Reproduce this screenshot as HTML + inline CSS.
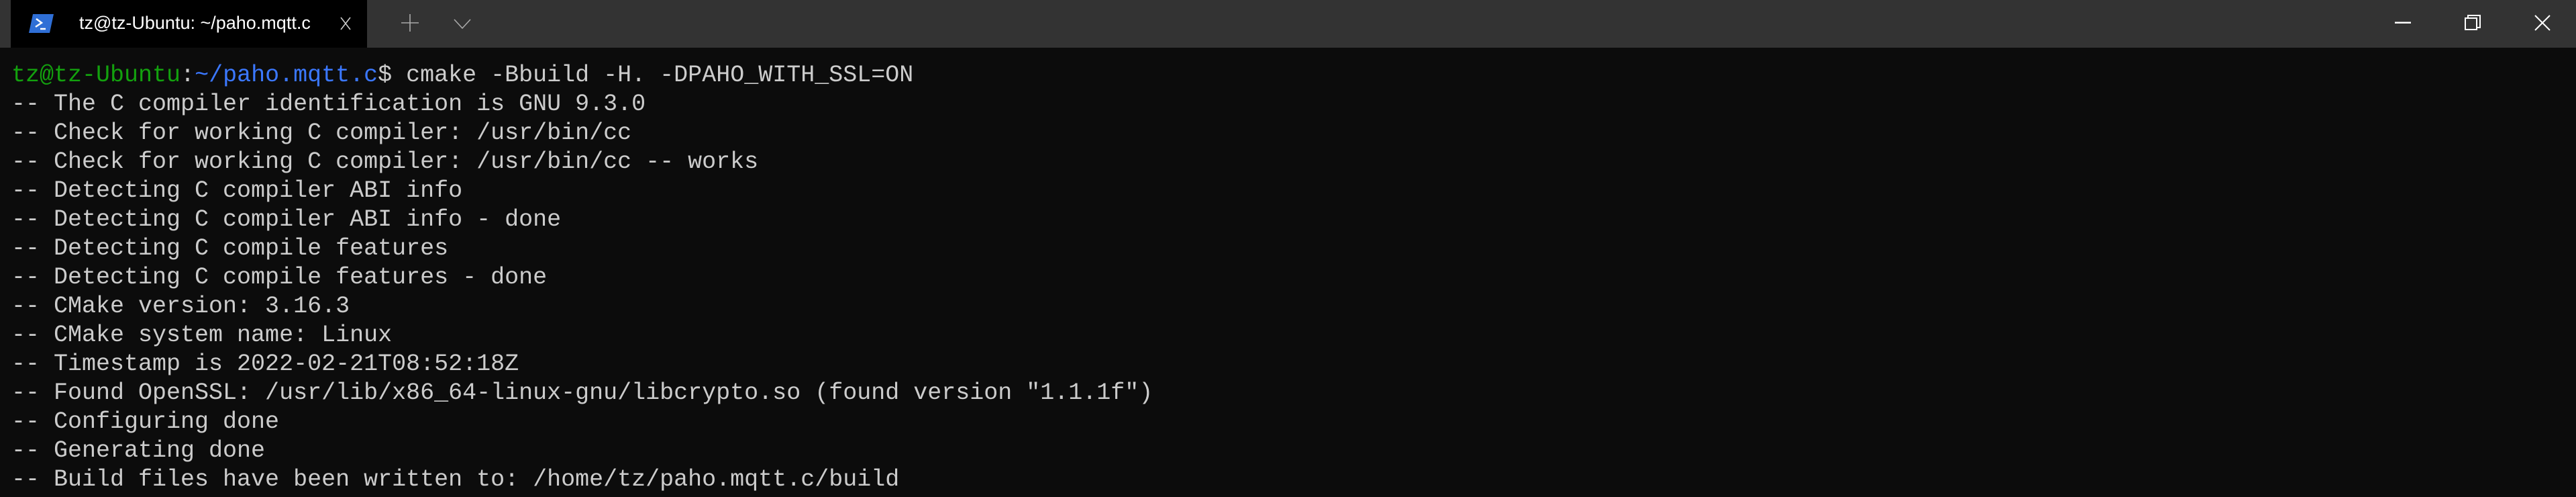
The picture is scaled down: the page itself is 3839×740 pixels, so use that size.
<!DOCTYPE html>
<html><head><meta charset="utf-8"><style>
html,body{margin:0;padding:0;}
body{width:3839px;height:740px;background:#0c0c0c;overflow:hidden;position:relative;}
.bar{position:absolute;left:0;top:0;width:3839px;height:71px;background:#333333;}
.tab{position:absolute;left:16px;top:0;width:531px;height:71px;background:#000;}
.title{position:absolute;left:102px;top:19px;font:27px "Liberation Sans",sans-serif;color:#fff;white-space:nowrap;}
pre{position:absolute;left:17px;top:91px;margin:0;font:35px/43px "Liberation Mono",monospace;color:#cccccc;white-space:pre;}
.g{color:#13a10e}.b{color:#3b78ff}
svg{position:absolute;}
</style></head><body>
<div class="bar"></div>
<div class="tab">
<svg style="left:27px;top:21px" width="38" height="28" viewBox="0 0 38 28"><path d="M6 0H37L31 28H0Z" fill="#2f6fd6"/><path d="M11 7l8 6-9 6" stroke="#fff" stroke-width="2.5" fill="none"/><path d="M17 22h8" stroke="#fff" stroke-width="2.5"/></svg>
<div class="title">tz@tz-Ubuntu: ~/paho.mqtt.c</div>
<svg style="left:491px;top:25px" width="16" height="20" viewBox="0 0 16 20"><path d="M1 1L15 19M15 1L1 19" stroke="#ccc" stroke-width="1.6"/></svg>
</div>
<svg style="left:597px;top:20px" width="28" height="28" viewBox="0 0 28 28"><path d="M14 1V27M1 14H27" stroke="#aaa" stroke-width="1.6"/></svg>
<svg style="left:676px;top:28px" width="26" height="16" viewBox="0 0 26 16"><path d="M1 1L13 14L25 1" stroke="#aaa" stroke-width="1.6" fill="none"/></svg>
<svg style="left:3569px;top:32px" width="24" height="4"><rect width="24" height="2.5" y="0.5" fill="#fff"/></svg>
<svg style="left:3673px;top:22px" width="24" height="24" viewBox="0 0 24 24"><rect x="5" y="1" width="18" height="18" fill="none" stroke="#fff" stroke-width="2"/><rect x="1" y="5" width="17" height="17" fill="#333" stroke="#fff" stroke-width="2"/></svg>
<svg style="left:3777px;top:22px" width="24" height="24" viewBox="0 0 24 24"><path d="M1 1L23 23M23 1L1 23" stroke="#fff" stroke-width="2"/></svg>
<pre><span class="g">tz@tz-Ubuntu</span>:<span class="b">~/paho.mqtt.c</span>$ cmake -Bbuild -H. -DPAHO_WITH_SSL=ON
-- The C compiler identification is GNU 9.3.0
-- Check for working C compiler: /usr/bin/cc
-- Check for working C compiler: /usr/bin/cc -- works
-- Detecting C compiler ABI info
-- Detecting C compiler ABI info - done
-- Detecting C compile features
-- Detecting C compile features - done
-- CMake version: 3.16.3
-- CMake system name: Linux
-- Timestamp is 2022-02-21T08:52:18Z
-- Found OpenSSL: /usr/lib/x86_64-linux-gnu/libcrypto.so (found version "1.1.1f")
-- Configuring done
-- Generating done
-- Build files have been written to: /home/tz/paho.mqtt.c/build</pre>
</body></html>
